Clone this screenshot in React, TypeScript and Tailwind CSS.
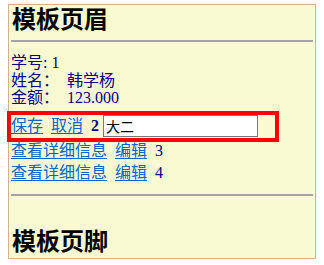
import React from "react";

const FONT = "font-['Liberation_Serif','Noto_Sans_CJK_SC',serif]";

function Link({ children, className = "" }: { children: React.ReactNode; className?: string }) {
  return (
    <a href="#" className={`text-[#0066cc] underline underline-offset-[2px] decoration-1 ${className}`}>
      {children}
    </a>
  );
}

export default function App() {
  return (
    <div className={`w-[324px] h-[265px] bg-white pt-[4px] pl-[8px] ${FONT}`}>
      <div className="w-[308px] h-[255px] border border-[#d2b48c] bg-[#fafad2] px-[2px] flex flex-col">
        <h1 className="mt-[1px] h-[28px] leading-[28px] text-[24px] font-bold text-black pl-[1px]">模板页眉</h1>
        <div className="mt-[6px] h-[2px] bg-[#a4a4a4]" />
        <div className="mt-[12px] text-[16px] leading-[17.5px] text-[#000080]">
          <div>学号: 1</div>
          <div className="flex">
            <span>姓名：</span>
            <span className="ml-[8px]">韩学杨</span>
          </div>
          <div className="flex">
            <span>金额：</span>
            <span className="ml-[8px]">123.000</span>
          </div>
        </div>
        <div className="relative mt-[4.5px] h-[29px] flex items-center text-[16px] text-[#000080]">
          <Link>保存</Link>
          <Link className="ml-[8px]">取消</Link>
          <span className="ml-[8px] font-bold">2</span>
          <input
            readOnly
            value="大二"
            className="ml-[4px] w-[155px] h-[22px] border border-[#7a7a7a] bg-white px-[2px] text-[14px] text-black font-['Noto_Sans_CJK_SC',sans-serif] outline-none"
          />
          <div className="absolute left-[-4px] top-0 w-[272px] h-[31px] border-4 border-[#ff0000] pointer-events-none" />
        </div>
        <div className="h-[22px] flex items-center text-[16px] text-[#000080]">
          <Link>查看详细信息</Link>
          <Link className="ml-[8px]">编辑</Link>
          <span className="ml-[8px]">3</span>
        </div>
        <div className="h-[22px] flex items-center text-[16px] text-[#000080]">
          <Link>查看详细信息</Link>
          <Link className="ml-[8px]">编辑</Link>
          <span className="ml-[8px]">4</span>
        </div>
        <div className="mt-[10px] h-[2px] bg-[#a4a4a4]" />
        <h1 className="mt-[32px] h-[28px] leading-[28px] text-[24px] font-bold text-black pl-[1px]">模板页脚</h1>
      </div>
    </div>
  );
}
